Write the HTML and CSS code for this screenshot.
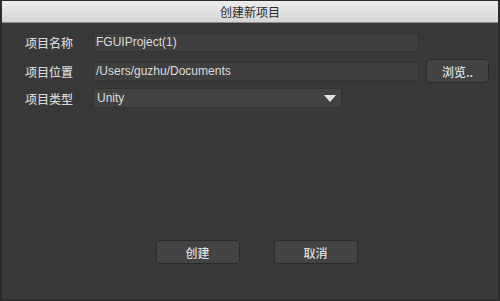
FILE: index.html
```html
<!DOCTYPE html>
<html lang="zh-CN">
<head>
    <meta charset="UTF-8">
    <title>创建新项目</title>
    <link rel="stylesheet" href="styles.css">
</head>
<body>

    <div class="window">
        <div class="title-bar">创建新项目</div>

        <div class="content">
            <!-- 项目信息 -->
            <div class="form-row row-name">
                <label class="field-label">项目名称</label>
                <div class="text-field">FGUIProject(1)</div>
            </div>

            <div class="form-row row-path">
                <label class="field-label">项目位置</label>
                <div class="text-field">/Users/guzhu/Documents</div>
                <button class="btn btn-browse">浏览..</button>
            </div>

            <div class="form-row row-type">
                <label class="field-label">项目类型</label>
                <div class="select-field">
                    <span>Unity</span>
                    <span class="select-arrow"></span>
                </div>
            </div>

            <!-- 操作按钮 -->
            <div class="actions">
                <button class="btn btn-action">创建</button>
                <button class="btn btn-action">取消</button>
            </div>
        </div>
    </div>

</body>
</html>
```

FILE: styles.css
```css
html, body {
    margin: 0;
    padding: 0;
}

body {
    width: 500px;
    height: 301px;
    background-color: #2a2a2a;
    font-family: "Liberation Sans", "Noto Sans CJK SC", sans-serif;
    font-size: 12px;
    color: #d8d8d8;
}

.window {
    width: 500px;
    height: 301px;
    box-sizing: border-box;
    border: 2px solid #2c2c2c;
    border-top-width: 1px;
    display: flex;
    flex-direction: column;
    background-color: #383838;
}

.title-bar {
    height: 21px;
    line-height: 21px;
    text-align: center;
    font-family: "Noto Sans CJK SC", sans-serif;
    font-size: 12px;
    color: #2a2a2a;
    background: linear-gradient(#ededed, #d5d5d5);
    border-bottom: 1px solid #8e8e8e;
}

.content {
    flex: 1;
    display: flex;
    flex-direction: column;
    padding: 10px 0 35px 23px;
}

.form-row {
    display: flex;
    align-items: center;
}

.row-path {
    height: 24px;
    margin-top: 7px;
}

.row-type {
    margin-top: 5px;
}

.field-label {
    width: 68px;
    font-family: "Noto Sans CJK SC", sans-serif;
    font-size: 12px;
    font-weight: 500;
    color: #d4d4d4;
}

.text-field,
.select-field {
    box-sizing: border-box;
    height: 19px;
    line-height: 17px;
    padding: 0 3px 0 2px;
    background-color: #3f3f3f;
    border: 1px solid #333333;
    color: #dcdcdc;
    font-size: 12px;
}

.text-field {
    width: 326px;
}

.select-field {
    width: 249px;
    height: 20px;
    line-height: 18px;
    display: flex;
    justify-content: space-between;
    align-items: center;
    padding-left: 3px;
    padding-right: 5px;
    background-color: #424242;
}

.select-arrow {
    width: 0;
    height: 0;
    border-left: 6px solid transparent;
    border-right: 6px solid transparent;
    border-top: 7px solid #e2e2e2;
}

.btn {
    box-sizing: border-box;
    background-color: #434343;
    border: 1px solid #2b2b2b;
    border-radius: 4px;
    color: #dedede;
    font-family: "Noto Sans CJK SC", sans-serif;
    font-size: 12px;
    font-weight: 500;
    padding: 0;
    cursor: pointer;
}

.btn:hover {
    background-color: #4b4b4b;
}

.btn-browse {
    width: 63px;
    height: 24px;
    margin-left: 7px;
}

.actions {
    margin-top: auto;
    display: flex;
    justify-content: center;
    gap: 34px;
    margin-left: -10px;
}

.btn-action {
    width: 84px;
    height: 24px;
}
```
